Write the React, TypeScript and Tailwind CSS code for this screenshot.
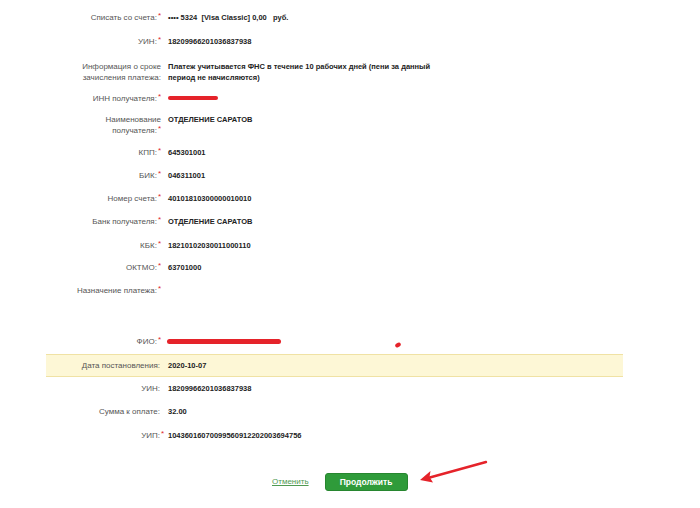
import type { ReactNode } from "react";

const font = { fontFamily: '"Liberation Sans", Arial, sans-serif' };

function Star() {
  return <span className="relative -top-[2px] ml-[1px] text-[#e0262b]">*</span>;
}

interface RowProps {
  label: ReactNode;
  req?: boolean;
  className?: string;
  children?: ReactNode;
}

// upper block: asterisk sits inline, label column ends at the star
function Row({ label, req, className, children }: RowProps) {
  return (
    <div className={"flex items-start " + (className ?? "")}>
      <div className="w-[115px] shrink-0 text-right text-[8px] leading-[11px] text-[#555]">
        {label}
        {req && <Star />}
      </div>
      <div className="ml-[7px] text-[7.5px] font-bold leading-[11px] text-[#222]">
        {children}
      </div>
    </div>
  );
}

// lower block: colon lines up, star gets its own slot
function InfoRow({ label, req, className, children }: RowProps) {
  return (
    <div className={"flex items-center " + (className ?? "")}>
      <div className="w-[114px] shrink-0 text-right text-[8px] leading-[11px] text-[#555]">
        {label}
      </div>
      <div className="w-[5px] shrink-0 text-[8px] leading-[11px]">
        {req && <Star />}
      </div>
      <div className="ml-[3px] text-[7.5px] font-bold leading-[11px] text-[#222]">
        {children}
      </div>
    </div>
  );
}

function Arrow() {
  return (
    <svg
      className="absolute left-[372px] top-[-13px]"
      width="72"
      height="26"
      viewBox="0 0 72 26"
    >
      <line x1="68" y1="2" x2="10" y2="18" stroke="#e5232a" strokeWidth="2.4" strokeLinecap="round" />
      <polygon points="2,20 15,22.5 11.5,17 12.5,11" fill="#e5232a" />
    </svg>
  );
}

export default function App() {
  return (
    <div className="min-h-[508px] bg-white pl-[46px] pt-[12px]" style={font}>
      <div className="w-[577px]">
        <Row label="Списать со счета:" req>
          •••• 5324&nbsp; [Visa Classic] 0,00 &nbsp; руб.
        </Row>
        <Row label="УИН:" req className="mt-[13px]">
          18209966201036837938
        </Row>
        <Row
          label={
            <>
              Информация о сроке
              <br />
              зачисления платежа:
            </>
          }
          className="mt-[14px]"
        >
          Платеж учитывается ФНС в течение 10 рабочих дней (пени за данный
          <br />
          период не начисляются)
        </Row>
        <Row label="ИНН получателя:" req className="mt-[10px]">
          <div className="mt-[3px] h-[4px] w-[50px] rounded-full bg-[#e5232a]" />
        </Row>
        <Row
          label={
            <>
              Наименование
              <br />
              получателя:
            </>
          }
          req
          className="mt-[10px]"
        >
          ОТДЕЛЕНИЕ САРАТОВ
        </Row>
        <Row label="КПП:" req className="mt-[11px]">
          645301001
        </Row>
        <Row label="БИК:" req className="mt-[12px]">
          046311001
        </Row>
        <Row label="Номер счета:" req className="mt-[12px]">
          40101810300000010010
        </Row>
        <Row label="Банк получателя:" req className="mt-[12px]">
          ОТДЕЛЕНИЕ САРАТОВ
        </Row>
        <Row label="КБК:" req className="mt-[13px]">
          18210102030011000110
        </Row>
        <Row label="ОКТМО:" req className="mt-[11px]">
          63701000
        </Row>
        <Row label="Назначение платежа:" req className="mt-[12px]" />
        <Row label="ФИО:" req className="relative mt-[40px]">
          <div className="ml-[-1px] mt-[3px] h-[4.5px] w-[114px] rounded-full bg-[#e5232a]" />
          <div className="absolute left-[349px] top-[7px] h-[4px] w-[6px] -rotate-[30deg] rounded-full bg-[#e5232a]" />
        </Row>

        <InfoRow
          label="Дата постановления:"
          className="mt-[7px] h-[23px] border-y border-[#f0e2a4] bg-[#fdf7d6]"
        >
          2020-10-07
        </InfoRow>
        <InfoRow label="УИН:" className="mt-[6px]">
          18209966201036837938
        </InfoRow>
        <InfoRow label="Сумма к оплате:" className="mt-[12px]">
          32.00
        </InfoRow>
        <InfoRow label="УИП:" req className="mt-[13px]">
          10436016070099560912202003694756
        </InfoRow>

        <div className="relative mt-[32px] flex items-center pl-[226px]">
          <a href="#" className="text-[8px] text-[#4f9a52] underline">
            Отменить
          </a>
          <button className="ml-[16px] h-[18px] w-[83px] rounded-[3px] border border-[#27862f] bg-[#2f9b3a] text-[8.5px] font-bold text-white">
            Продолжить
          </button>
          <Arrow />
        </div>
      </div>
    </div>
  );
}
